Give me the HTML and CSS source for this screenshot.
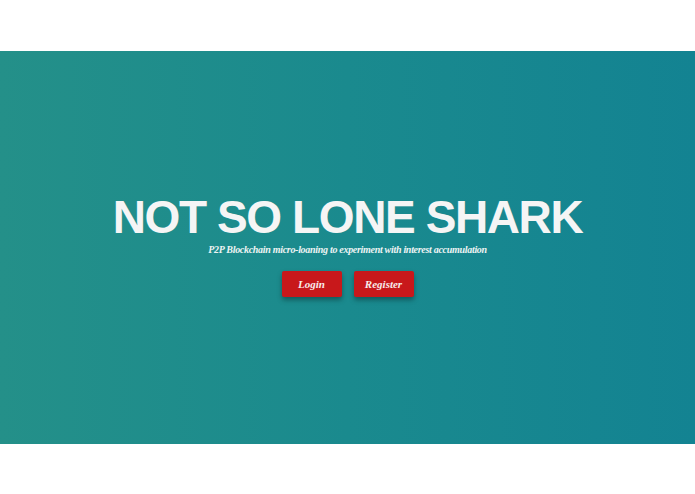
FILE: index.html
```html
<!DOCTYPE html>
<html>
<head>
<meta charset="utf-8">
<link rel="stylesheet" href="styles.css">
</head>
<body>
<section class="hero">
  <h1 class="title">NOT SO LONE SHARK</h1>
  <p class="tagline">P2P Blockchain micro-loaning to experiment with interest accumulation</p>
  <div class="actions">
    <a class="btn" href="#">Login</a>
    <a class="btn" href="#">Register</a>
  </div>
</section>
</body>
</html>
```
FILE: styles.css
```css
html, body {
  margin: 0;
  padding: 0;
  background: #ffffff;
}
body {
  width: 695px;
  height: 494px;
  overflow: hidden;
}
.hero {
  margin-top: 51px;
  height: 393px;
  box-sizing: border-box;
  background: linear-gradient(90deg, #249089 0%, #1a8a8e 50%, #138392 100%);
  display: flex;
  flex-direction: column;
  align-items: center;
  padding-top: 143px;
}
.title {
  margin: 0;
  font-family: "Liberation Sans", Arial, sans-serif;
  font-weight: 700;
  font-size: 46px;
  line-height: 46px;
  letter-spacing: -1.4px;
  color: #f5f5f5;
}
.tagline {
  margin: 4px 0 0;
  font-family: "Liberation Serif", "Times New Roman", serif;
  font-style: italic;
  font-weight: 700;
  font-size: 10px;
  line-height: 12px;
  letter-spacing: -0.3px;
  color: #eef4f4;
}
.actions {
  display: flex;
  gap: 12px;
  margin-top: 15px;
}
.btn {
  width: 60px;
  height: 26px;
  display: flex;
  align-items: center;
  justify-content: center;
  background: #c8181b;
  border-radius: 2px;
  box-shadow: 0 3px 5px rgba(0, 0, 0, 0.35);
  color: #f7ecec;
  text-decoration: none;
  font-family: "Liberation Serif", "Times New Roman", serif;
  font-style: italic;
  font-weight: 700;
  font-size: 11px;
}
```
